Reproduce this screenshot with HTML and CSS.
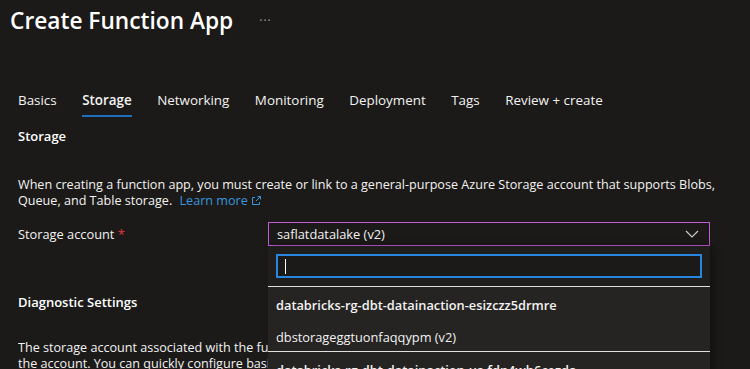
FILE: index.html
```html
<!DOCTYPE html>
<html>
<head>
<meta charset="utf-8">
<link rel="stylesheet" href="styles.css">
</head>
<body>
<div class="page">
  <header class="header">
    <h1 class="title">Create Function App</h1>
    <span class="more">···</span>
  </header>
  <nav class="tabs">
    <span class="tab">Basics</span>
    <span class="tab active">Storage</span>
    <span class="tab">Networking</span>
    <span class="tab">Monitoring</span>
    <span class="tab">Deployment</span>
    <span class="tab">Tags</span>
    <span class="tab">Review + create</span>
  </nav>
  <section class="content">
    <h2 class="section-title">Storage</h2>
    <p class="desc">When creating a function app, you must create or link to a general-purpose Azure Storage account that supports Blobs,<br>Queue, and Table storage. <a class="link">Learn more <svg class="ext" width="11" height="11" viewBox="0 0 11 11"><path d="M6.5 1.5h3v3M9.5 1.5L5 6M4 2.5H1.5v7h7V7" fill="none" stroke="#3a96dd" stroke-width="1"/></svg></a></p>
    <div class="row">
      <div class="label">Storage account <span class="req">*</span></div>
      <div class="control">
        <div class="select">
          <span>saflatdatalake (v2)</span>
          <svg class="chev" width="14" height="8" viewBox="0 0 14 8"><path d="M1 1l6 6 6-6" fill="none" stroke="#d0d0d0" stroke-width="1.1"/></svg>
        </div>
        <div class="panel">
          <div class="search-wrap"><div class="search"><span class="caret"></span></div></div>
          <div class="opt bold">databricks-rg-dbt-datainaction-esizczz5drmre</div>
          <div class="opt">dbstorageggtuonfaqqypm (v2)</div>
          <div class="opt bold sep">databricks-rg-dbt-datainaction-us-fdn4wh6cezda</div>
        </div>
      </div>
    </div>
    <h2 class="section-title diag">Diagnostic Settings</h2>
    <p class="desc diag-desc">The storage account associated with the function app is used to store diagnostic logs and metrics. You must have access to<br>the account. You can quickly configure basic diagnostic settings for your function app here.</p>
  </section>
</div>
</body>
</html>
```

FILE: styles.css
```css
* { box-sizing: border-box; }
html, body { margin: 0; padding: 0; }
body {
  background: #1b1a19;
  color: #f3f2f1;
  font-family: "Open Sans", "Noto Sans", sans-serif;
  width: 750px;
  height: 369px;
  overflow: hidden;
}
.page { position: relative; height: 369px; overflow: hidden; }
.header {
  display: flex;
  align-items: center;
  padding: 5px 0 0 10px;
  height: 36px;
}
.title {
  margin: 0;
  font-size: 22.7px;
  font-weight: 600;
  color: #ffffff;
  line-height: 30px;
}
.more {
  margin-left: 26px;
  color: #a19f9d;
  font-size: 12px;
  letter-spacing: 1px;
}
.tabs {
  display: flex;
  padding: 50px 0 0 18px;
  height: 81px;
}
.tab {
  font-size: 13.4px;
  line-height: 20px;
  height: 31px;
  padding-top: 4px;
  margin-right: 25.5px;
  color: #f3f2f1;
}
.tab.active {
  font-weight: 600;
  border-bottom: 2px solid #1f6fbf;
}
.content { padding: 0 0 0 18px; }
.section-title {
  margin: 9px 0 0;
  font-size: 13px;
  font-weight: 600;
  line-height: 20px;
  color: #ffffff;
}
.desc {
  margin: 31px 0 0;
  font-size: 12.6px;
  line-height: 16px;
  white-space: nowrap;
}
.link { color: #3a96dd; text-decoration: none; margin-left: 4px; }
.ext { vertical-align: -1px; }
.row {
  display: flex;
  margin-top: 13px;
}
.label {
  width: 250px;
  font-size: 12.8px;
  line-height: 24px;
}
.req { color: #e8333f; }
.control { position: relative; width: 442px; }
.select {
  height: 24px;
  border: 1px solid #c15bd6;
  display: flex;
  align-items: center;
  justify-content: space-between;
  padding: 0 10px 0 8px;
  font-size: 12.8px;
}
.panel {
  position: absolute;
  left: 0;
  top: 24px;
  width: 442px;
  height: 200px;
  background: #252423;
  box-shadow: 4px 0 8px rgba(0,0,0,0.35);
  z-index: 5;
}
.search-wrap {
  background: #1f1e1d;
  padding: 8px;
  border-bottom: 1px solid #e1dfdd;
  height: 41px;
}
.search {
  height: 24px;
  border: 2px solid #2886de;
  background: #1b1a19;
  position: relative;
}
.caret {
  position: absolute;
  left: 7px;
  top: 3px;
  width: 1px;
  height: 15px;
  background: #ffffff;
}
.opt {
  font-size: 12.8px;
  line-height: 30px;
  height: 32px;
  padding: 3px 0 0 8px;
  white-space: nowrap;
}
.opt.bold { font-weight: 600; }
.opt.sep { border-top: 1px solid #e1dfdd; }
.diag { margin-top: 46px; }
.diag-desc {
  margin-top: 28px;
  width: 250px;
  overflow: hidden;
}
```
